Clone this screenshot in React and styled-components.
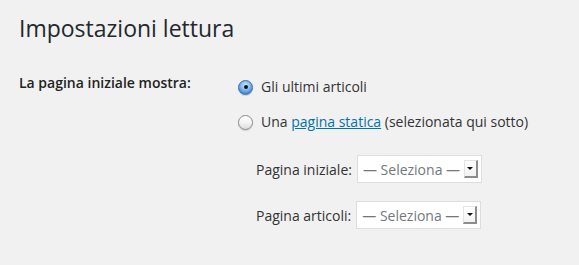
import React from "react";
import styled, { createGlobalStyle } from "styled-components";

const Global = createGlobalStyle`
  html, body { margin: 0; padding: 0; background: #f1f1f1; }
  body { font-family: "Open Sans", "Noto Sans", sans-serif; color: #23282d; }
`;

const Page = styled.div`
  padding: 12px 19px 0 19px;
`;

const Title = styled.h1`
  margin: 0;
  font-size: 23px;
  font-weight: 400;
  line-height: 32px;
  color: #23282d;
`;

const Form = styled.div`
  display: grid;
  grid-template-columns: 219px 1fr;
  margin-top: 29px;
`;

const Label = styled.div`
  font-size: 14px;
  font-weight: 600;
  line-height: 20px;
  color: #222;
`;

const Options = styled.div`
  display: flex;
  flex-direction: column;
`;

const RadioRow = styled.label`
  display: flex;
  align-items: center;
  gap: 8px;
  font-size: 14px;
  line-height: 20px;
  color: #333;
  height: 20px;
  margin-top: ${(p) => p.$mt || 0}px;
`;

const Radio = styled.span`
  width: 15px;
  height: 15px;
  border-radius: 50%;
  box-sizing: border-box;
  flex: none;
  display: flex;
  align-items: center;
  justify-content: center;
  border: 1px solid ${(p) => (p.$checked ? "#3a6ea8" : "#8a8a8a")};
  background: ${(p) =>
    p.$checked
      ? "radial-gradient(circle at 50% 35%, #d6ebff 0%, #7fb6ee 45%, #3f88d8 75%, #2c6cc0 100%)"
      : "linear-gradient(#ffffff 0%, #f4f4f4 50%, #dcdcdc 100%)"};
  box-shadow: 0 1px 1px rgba(0, 0, 0, 0.15);
  &::after {
    content: "";
    display: ${(p) => (p.$checked ? "block" : "none")};
    width: 4px;
    height: 4px;
    border-radius: 50%;
    background: #111;
  }
`;

const Link = styled.a`
  color: #0073aa;
  text-decoration: underline;
`;

const SelectRow = styled.div`
  display: flex;
  align-items: center;
  gap: 5px;
  margin-left: ${(p) => p.$ml}px;
  margin-top: ${(p) => p.$mt}px;
  font-size: 14px;
  color: #333;
`;

const Select = styled.div`
  width: 125px;
  height: 28px;
  box-sizing: border-box;
  background: #fff;
  border: 1px solid #ddd;
  display: flex;
  align-items: center;
  justify-content: space-between;
  padding: 0 3px 0 5px;
  font-size: 14px;
  color: #72777c;
`;

const Arrow = styled.span`
  width: 14px;
  height: 18px;
  box-sizing: border-box;
  background: linear-gradient(#fff, #f3f3f3);
  border: 1px solid #e4e4e4;
  border-right: 2px solid #8d8d8d;
  border-bottom: 2px solid #8d8d8d;
  display: flex;
  align-items: center;
  justify-content: center;
  &::after {
    content: "";
    border-left: 3px solid transparent;
    border-right: 3px solid transparent;
    border-top: 3px solid #111;
  }
`;

export default function App() {
  return (
    <>
      <Global />
      <Page>
        <Title>Impostazioni lettura</Title>
        <Form>
          <Label>La pagina iniziale mostra:</Label>
          <Options>
            <RadioRow $mt={4}>
              <Radio $checked />
              Gli ultimi articoli
            </RadioRow>
            <RadioRow $mt={15}>
              <Radio />
              <span>
                Una <Link href="#">pagina statica</Link> (selezionata qui sotto)
              </span>
            </RadioRow>
            <SelectRow $ml={18} $mt={23}>
              Pagina iniziale:
              <Select>
                — Seleziona — <Arrow />
              </Select>
            </SelectRow>
            <SelectRow $ml={18} $mt={18}>
              Pagina articoli:
              <Select>
                — Seleziona — <Arrow />
              </Select>
            </SelectRow>
          </Options>
        </Form>
      </Page>
    </>
  );
}
